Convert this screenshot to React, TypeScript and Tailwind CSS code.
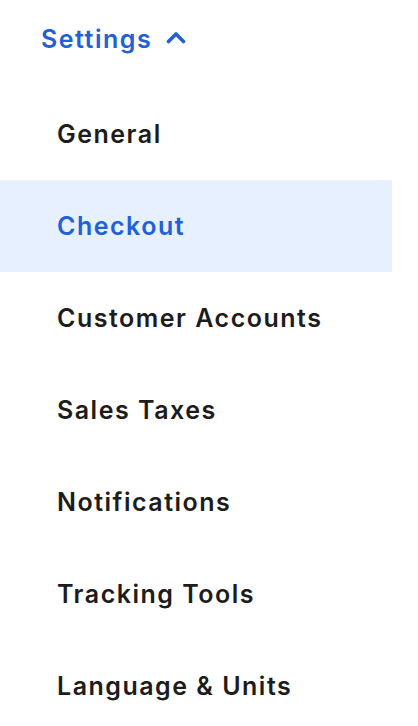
const items = [
  'General',
  'Checkout',
  'Customer Accounts',
  'Sales Taxes',
  'Notifications',
  'Tracking Tools',
  'Language & Units',
];

export default function App() {
  return (
    <div className="w-[418px] h-[726px] overflow-hidden bg-white font-['Inter',sans-serif]">
      <div className="flex items-center gap-[14px] pl-[41px] pt-[22px] h-[56px]">
        <span className="text-[25px] tracking-[1.5px] font-semibold text-[#2160d6] leading-none">Settings</span>
        <svg width="20" height="13" viewBox="0 0 20 13" className="mt-[-4px]">
          <path d="M2.5 10.5 L10 3 L17.5 10.5" fill="none" stroke="#2160d6" strokeWidth="3.6" strokeLinecap="round" strokeLinejoin="round" />
        </svg>
      </div>
      <nav className="flex flex-col w-[392px] mt-[32px]">
        {items.map((label) => {
          const active = label === 'Checkout';
          return (
            <div
              key={label}
              className={
                active
                  ? 'h-[92px] flex items-center pl-[57px] pt-[2px] bg-[#e6f0fe] text-[#2160d6] text-[25px] tracking-[1.5px] font-semibold'
                  : 'h-[92px] flex items-center pl-[57px] pt-[2px] text-[#1c1c1c] text-[25px] tracking-[1.5px] font-semibold'
              }
            >
              {label}
            </div>
          );
        })}
      </nav>
    </div>
  );
}
